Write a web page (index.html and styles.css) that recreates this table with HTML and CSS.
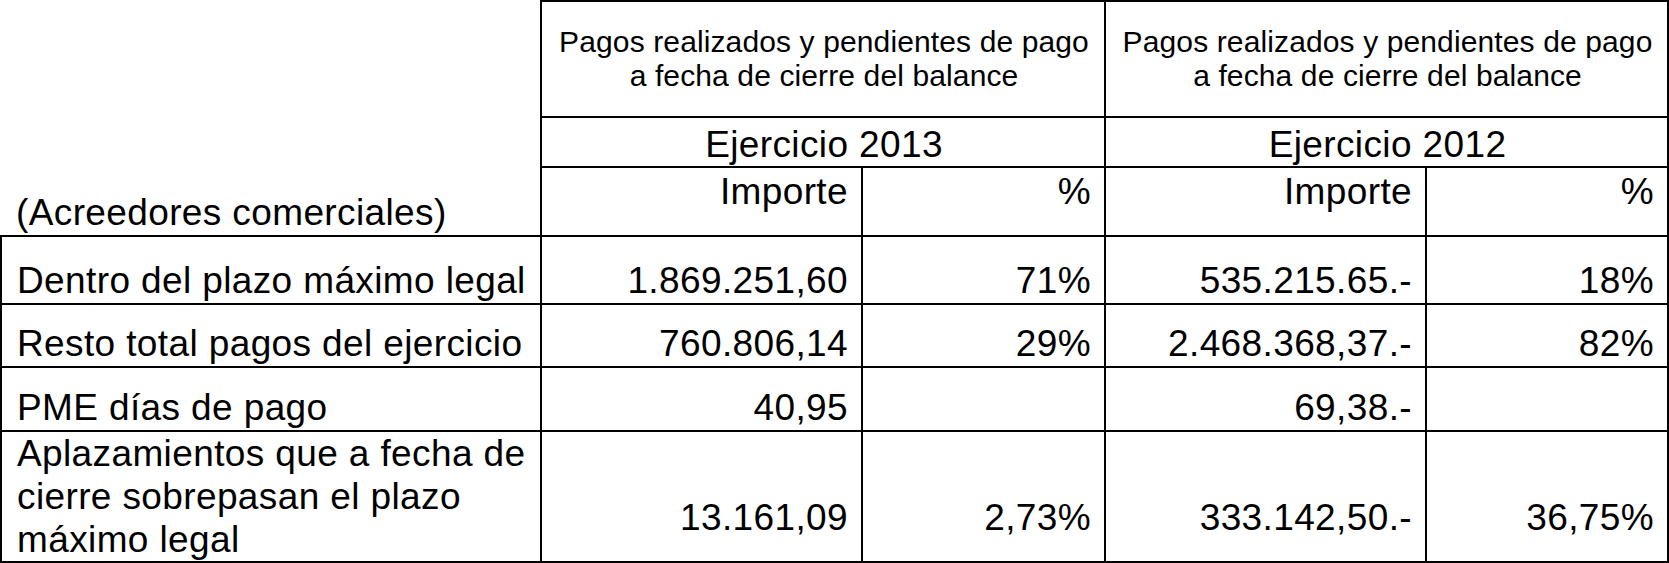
FILE: index.html
```html
<!DOCTYPE html>
<html lang="es">
<head>
<meta charset="utf-8">
<title>Acreedores comerciales</title>
<link rel="stylesheet" href="styles.css">
</head>
<body>
<table class="grid">
  <colgroup>
    <col class="c-label">
    <col class="c-imp">
    <col class="c-pct">
    <col class="c-imp">
    <col class="c-pct2">
  </colgroup>
  <tr class="h1">
    <td class="corner" rowspan="3">(Acreedores comerciales)</td>
    <td class="title" colspan="2">Pagos realizados y pendientes de pago<br>a fecha de cierre del balance</td>
    <td class="title" colspan="2">Pagos realizados y pendientes de pago<br>a fecha de cierre del balance</td>
  </tr>
  <tr class="h2">
    <td class="year" colspan="2">Ejercicio 2013</td>
    <td class="year" colspan="2">Ejercicio 2012</td>
  </tr>
  <tr class="h3">
    <td class="colhead">Importe</td>
    <td class="colhead">%</td>
    <td class="colhead">Importe</td>
    <td class="colhead">%</td>
  </tr>
  <tr class="r1">
    <td class="label">Dentro del plazo máximo legal</td>
    <td class="num">1.869.251,60</td>
    <td class="num">71%</td>
    <td class="num">535.215.65.-</td>
    <td class="num">18%</td>
  </tr>
  <tr class="r2">
    <td class="label">Resto total pagos del ejercicio</td>
    <td class="num">760.806,14</td>
    <td class="num">29%</td>
    <td class="num">2.468.368,37.-</td>
    <td class="num">82%</td>
  </tr>
  <tr class="r3">
    <td class="label">PME días de pago</td>
    <td class="num">40,95</td>
    <td class="num"></td>
    <td class="num">69,38.-</td>
    <td class="num"></td>
  </tr>
  <tr class="r4">
    <td class="label multi">Aplazamientos que a fecha de cierre sobrepasan el plazo máximo legal</td>
    <td class="num">13.161,09</td>
    <td class="num">2,73%</td>
    <td class="num">333.142,50.-</td>
    <td class="num">36,75%</td>
  </tr>
</table>
</body>
</html>
```

FILE: styles.css
```css
html, body {
  margin: 0;
  padding: 0;
  background: #ffffff;
}

body {
  font-family: "Liberation Sans", Arial, sans-serif;
  color: #000000;
}

.grid {
  border-collapse: collapse;
  table-layout: fixed;
  width: 1667px;
  font-size: 37px;
  line-height: 43px;
  letter-spacing: 0.38px;
}

.c-label { width: 540px; }
.c-imp { width: 321px; }
.c-pct { width: 243px; }
.c-pct2 { width: 242px; }

.grid td {
  border: 2px solid #000;
  padding: 0 13px 0 15px;
  box-sizing: border-box;
  overflow: hidden;
}

.grid td.corner {
  border-top: none;
  border-left: none;
  vertical-align: bottom;
  text-align: left;
  padding: 0 0 1px 15px;
}

.grid td.title {
  text-align: center;
  vertical-align: top;
  font-size: 30px;
  line-height: 34px;
  letter-spacing: 0.12px;
  padding-top: 23px;
}

.h1 { height: 116px; }
.h2 { height: 50px; }
.h3 { height: 69px; }

.grid td.year {
  text-align: center;
  vertical-align: bottom;
  padding-bottom: 0;
}

.grid td.colhead {
  text-align: right;
  vertical-align: top;
  padding-top: 2px;
}

.grid td.label {
  text-align: left;
  vertical-align: bottom;
  padding-bottom: 1px;
}

.grid td.label.multi {
  vertical-align: top;
  padding-top: 0;
  padding-bottom: 0;
  line-height: 43px;
}

.grid td.num {
  text-align: right;
  vertical-align: bottom;
  padding-bottom: 1px;
}

.r1 { height: 68px; }
.r2 { height: 63px; }
.r3 { height: 64px; }
.r4 { height: 131px; }

.r4 td.num {
  padding-bottom: 22px;
}
```
